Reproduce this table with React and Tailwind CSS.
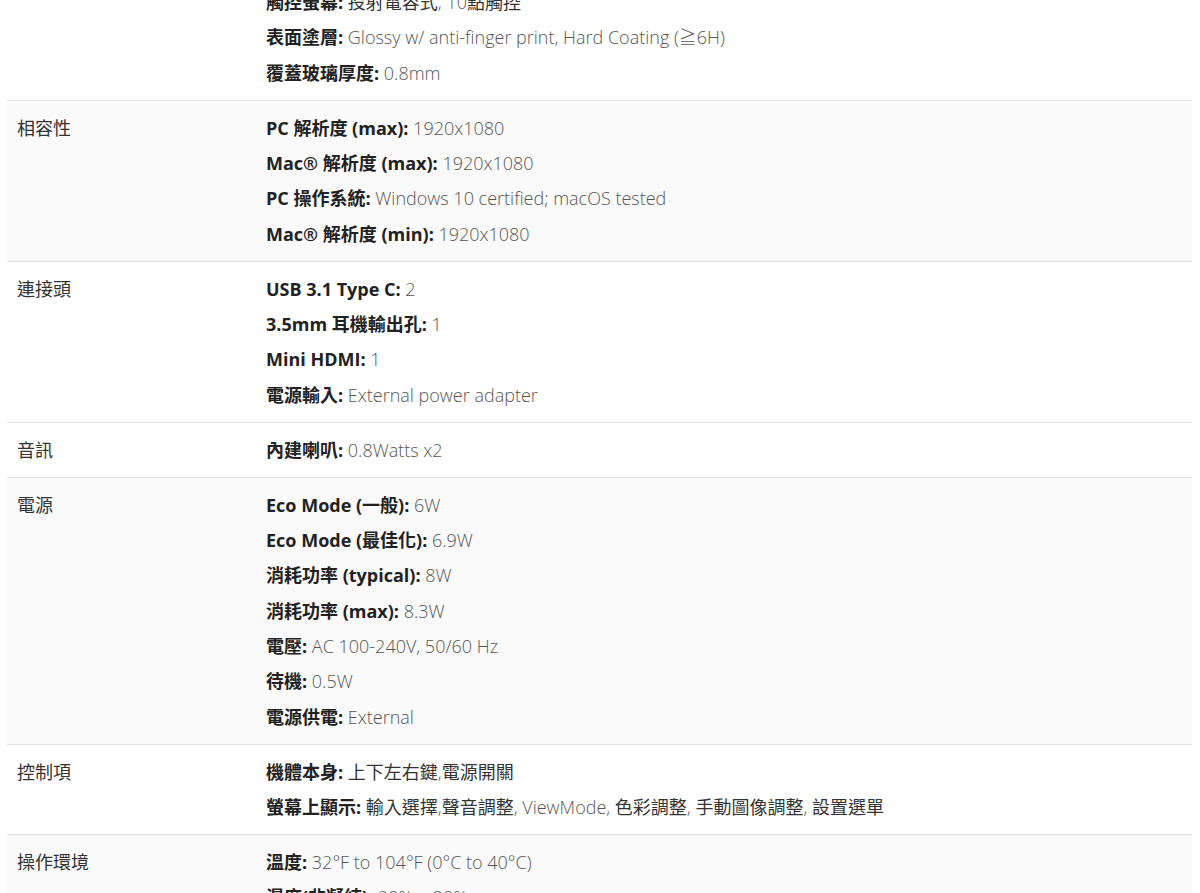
const specs = [
  {
    label: "",
    bg: "bg-white",
    items: [
      ["觸控螢幕", "投射電容式, 10點觸控"],
      ["表面塗層", "Glossy w/ anti-finger print, Hard Coating (≧6H)"],
      ["覆蓋玻璃厚度", "0.8mm"],
    ],
  },
  {
    label: "相容性",
    bg: "bg-[#fafafa]",
    items: [
      ["PC 解析度 (max)", "1920x1080"],
      ["Mac® 解析度 (max)", "1920x1080"],
      ["PC 操作系統", "Windows 10 certified; macOS tested"],
      ["Mac® 解析度 (min)", "1920x1080"],
    ],
  },
  {
    label: "連接頭",
    bg: "bg-white",
    items: [
      ["USB 3.1 Type C", "2"],
      ["3.5mm 耳機輸出孔", "1"],
      ["Mini HDMI", "1"],
      ["電源輸入", "External power adapter"],
    ],
  },
  {
    label: "音訊",
    bg: "bg-white",
    items: [["內建喇叭", "0.8Watts x2"]],
  },
  {
    label: "電源",
    bg: "bg-[#fafafa]",
    items: [
      ["Eco Mode (一般)", "6W"],
      ["Eco Mode (最佳化)", "6.9W"],
      ["消耗功率 (typical)", "8W"],
      ["消耗功率 (max)", "8.3W"],
      ["電壓", "AC 100-240V, 50/60 Hz"],
      ["待機", "0.5W"],
      ["電源供電", "External"],
    ],
  },
  {
    label: "控制項",
    bg: "bg-white",
    items: [
      ["機體本身", "上下左右鍵,電源開關"],
      ["螢幕上顯示", "輸入選擇,聲音調整, ViewMode, 色彩調整, 手動圖像調整, 設置選單"],
    ],
  },
  {
    label: "操作環境",
    bg: "bg-[#fafafa]",
    items: [
      ["溫度", "32°F to 104°F (0°C to 40°C)"],
      ["濕度(非凝結)", "20% ~ 90%"],
    ],
  },
];

// CJK chars have no light weight in the original, so they render regular & darker
function Value({ text }) {
  const parts = text.split(/([\u3000-\u9fff\uff00-\uffef]+)/);
  return (
    <span className="font-light text-[#555]">
      {parts.map((p, i) =>
        i % 2 === 1 ? (
          <span key={i} className="font-normal text-[#333]">{p}</span>
        ) : (
          p
        )
      )}
    </span>
  );
}

function SpecRow({ row, first }) {
  return (
    <div className={`flex ${row.bg} ${first ? "" : "border-t border-[#e0e0e0]"}`}>
      <div className="w-[249px] shrink-0 pl-[10px] pt-[14px] pb-[13px] text-[#333] leading-[27px]">
        {row.label}
      </div>
      <div className="flex-1 pl-[10px] pt-[14px] pb-[13px] flex flex-col gap-[8.33px]">
        {row.items.map(([k, v], i) => (
          <p key={i} className="leading-[27px]">
            <strong className="font-bold text-[#222]">{k}:</strong>{" "}
            <Value text={v} />
          </p>
        ))}
      </div>
    </div>
  );
}

export default function App() {
  return (
    <div
      className="bg-white overflow-hidden h-[893px] text-[18px]"
      style={{ fontFamily: '"Open Sans", "Noto Sans CJK TC", sans-serif' }}
    >
      <div className="ml-[7px] w-[1185px] -mt-[25px]">
        {specs.map((row, i) => (
          <SpecRow key={i} row={row} first={i === 0} />
        ))}
      </div>
    </div>
  );
}
